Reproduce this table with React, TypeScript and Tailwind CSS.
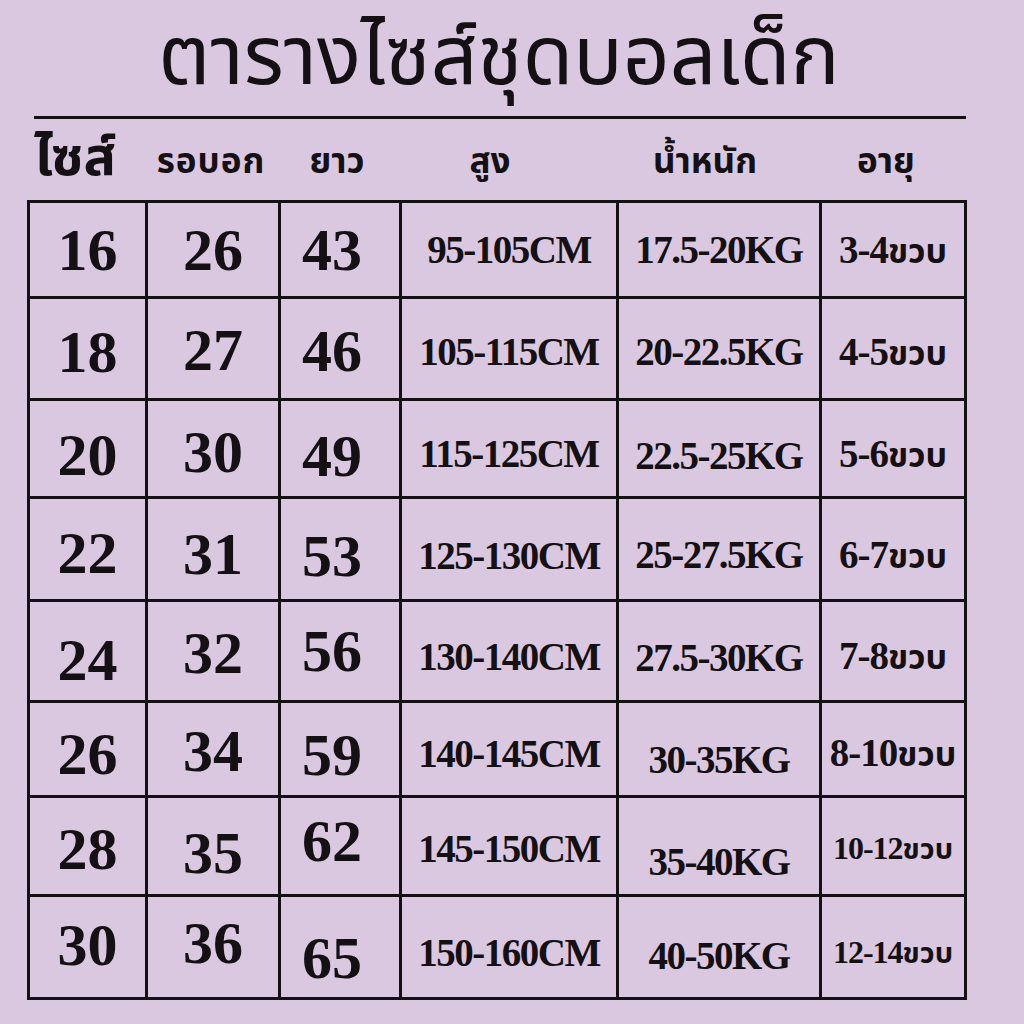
import React from 'react';

type Row = {
  size: string;
  chest: string;
  length: string;
  height: string;
  weight: string;
  age: string;
  // small vertical nudges seen in the chart
  nudge?: [string, string, string, string, string];
};

const rows: Row[] = [
  { size: '16', chest: '26', length: '43', height: '95-105CM', weight: '17.5-20KG', age: '3-4' },
  { size: '18', chest: '27', length: '46', height: '105-115CM', weight: '20-22.5KG', age: '4-5', nudge: ['mt-[6px]', 'mt-[2px]', 'mt-[4px]', 'mt-[6px]', 'mt-[6px]'] },
  { size: '20', chest: '30', length: '49', height: '115-125CM', weight: '22.5-25KG', age: '5-6', nudge: ['mt-[12px]', 'mt-[6px]', 'mt-[14px]', 'mt-[10px]', 'mt-[14px]'] },
  { size: '22', chest: '31', length: '53', height: '125-130CM', weight: '25-27.5KG', age: '6-7', nudge: ['mt-[8px]', 'mt-[10px]', 'mt-[14px]', 'mt-[12px]', 'mt-[10px]'] },
  { size: '24', chest: '32', length: '56', height: '130-140CM', weight: '27.5-30KG', age: '7-8', nudge: ['mt-[18px]', 'mt-[4px]', 'mt-[0px]', 'mt-[10px]', 'mt-[12px]'] },
  { size: '26', chest: '34', length: '59', height: '140-145CM', weight: '30-35KG', age: '8-10', nudge: ['mt-[10px]', 'mt-[4px]', 'mt-[12px]', 'mt-[8px]', 'mt-[20px]'] },
  { size: '28', chest: '35', length: '62', height: '145-150CM', weight: '35-40KG', age: '10-12', nudge: ['mt-[6px]', 'mt-[14px]', 'mt-[-10px]', 'mt-[4px]', 'mt-[30px]'] },
  { size: '30', chest: '36', length: '65', height: '150-160CM', weight: '40-50KG', age: '12-14', nudge: ['mt-[-4px]', 'mt-[-8px]', 'mt-[22px]', 'mt-[10px]', 'mt-[16px]'] },
];

// inner row heights between the 3px rules
const rowHeights = ['h-[93px]', 'h-[99px]', 'h-[95px]', 'h-[100px]', 'h-[98px]', 'h-[92px]', 'h-[96px]', 'h-[100px]'];

const thai = "font-['Noto_Sans_Thai','Noto_Sans','DejaVu_Sans',sans-serif]";
const serif = "font-['Liberation_Serif','Times_New_Roman',serif]";

function Cell({ children, className = '' }: { children: React.ReactNode; className?: string }) {
  return (
    <div className={`bg-[#dac8e0] flex items-center justify-center text-[#141014] ${className}`}>
      {children}
    </div>
  );
}

export default function App() {
  return (
    <div className="w-[1024px] h-[1024px] bg-[#dac8e0] flex flex-col overflow-hidden text-[#141014]">
      {/* title */}
      <div className="pt-[8px] pb-[6px] flex justify-center pr-[26px]">
        <h1 className={`${thai} text-[82px] leading-[102px] font-normal whitespace-nowrap`}>ตารางไซส์ชุดบอลเด็ก</h1>
      </div>
      <div className="ml-[34px] w-[932px] h-[3px] bg-[#141014]" />

      {/* column headings */}
      <div className={`${thai} h-[81px] flex items-center font-bold`}>
        <div className="w-[150px] text-center text-[54px] leading-[1.3]">ไซส์</div>
        <div className="w-[122px] text-center text-[35px] leading-[1.3] mt-[6px] tracking-[1px]">รอบอก</div>
        <div className="w-[138px] text-center text-[35px] leading-[1.3] mt-[6px] pr-[8px]">ยาว</div>
        <div className="w-[160px] text-center text-[35px] leading-[1.3] mt-[6px]">สูง</div>
        <div className="w-[270px] text-center text-[35px] leading-[1.3] mt-[6px]">น้ำหนัก</div>
        <div className="w-[92px] text-center text-[35px] leading-[1.3] mt-[6px]">อายุ</div>
      </div>

      {/* table */}
      <div className="ml-[27px] w-[940px] bg-[#141014] p-[3px] grid grid-cols-[115px_130px_118px_214px_200px_142px] gap-[3px]">
        {rows.map((r, i) => {
          const n = r.nudge ?? ['', '', '', '', ''];
          const small = i >= 6;
          return (
            <React.Fragment key={r.size}>
              <Cell className={`${rowHeights[i]} ${serif} font-bold text-[60px] leading-none`}>
                <span className={n[0]}>{r.size}</span>
              </Cell>
              <Cell className={`${rowHeights[i]} ${serif} font-bold text-[60px] leading-none`}>
                <span className={n[1]}>{r.chest}</span>
              </Cell>
              <Cell className={`${rowHeights[i]} ${serif} font-bold text-[60px] leading-none pr-[16px]`}>
                <span className={n[2]}>{r.length}</span>
              </Cell>
              <Cell className={`${rowHeights[i]} ${serif} font-bold text-[39px] leading-none tracking-[-1.5px]`}>
                <span className={n[3]}>{r.height}</span>
              </Cell>
              <Cell className={`${rowHeights[i]} ${serif} font-bold text-[39px] leading-none tracking-[-1.5px]`}>
                <span className={n[4]}>{r.weight}</span>
              </Cell>
              <Cell className={`${rowHeights[i]} leading-none`}>
                <span className={`flex items-baseline ${n[3]}`}>
                  <span className={`${serif} font-bold ${small ? 'text-[32px]' : 'text-[39px]'} tracking-[-1px]`}>{r.age}</span>
                  <span className={`${thai} font-bold ${small ? 'text-[29px]' : 'text-[34px]'}`}>ขวบ</span>
                </span>
              </Cell>
            </React.Fragment>
          );
        })}
      </div>
    </div>
  );
}
